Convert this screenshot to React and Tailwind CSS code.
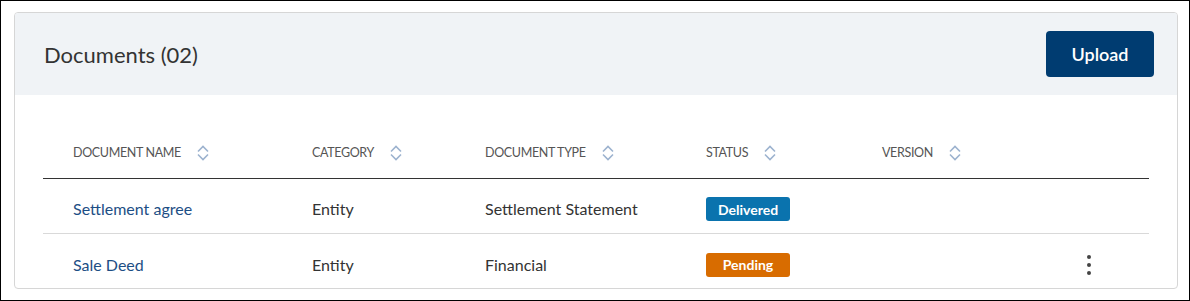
import React from "react";

function SortIcon() {
  return (
    <svg width="12" height="18" viewBox="0 0 12 18" fill="none" className="ml-[16px] shrink-0">
      <path d="M1 7.5 L6 2.5 L11 7.5" stroke="#9db3cf" strokeWidth="1.6" strokeLinejoin="miter" />
      <path d="M1 10.5 L6 15.5 L11 10.5" stroke="#9db3cf" strokeWidth="1.6" strokeLinejoin="miter" />
    </svg>
  );
}

function HeadCell({ label, sortable = true }) {
  return (
    <div className="flex items-center pl-[30px] h-full">
      <span className="text-[12.5px] tracking-[-0.35px] text-[#555555] uppercase">{label}</span>
      {sortable && <SortIcon />}
    </div>
  );
}

function Badge({ children, color }) {
  return (
    <span
      className={`inline-flex items-center justify-center w-[84px] h-[24px] rounded-[3px] text-white text-[14px] font-bold ${color}`}
    >
      {children}
    </span>
  );
}

function Kebab() {
  return (
    <div className="flex flex-col items-center gap-[4px] w-[5px]">
      <span className="w-[4px] h-[4px] rounded-full bg-[#444]" />
      <span className="w-[4px] h-[4px] rounded-full bg-[#444]" />
      <span className="w-[4px] h-[4px] rounded-full bg-[#444]" />
    </div>
  );
}

const rows = [
  { name: "Settlement agree", category: "Entity", type: "Settlement Statement", status: "Delivered", color: "bg-[#0a73ae]", menu: false, border: true },
  { name: "Sale Deed", category: "Entity", type: "Financial", status: "Pending", color: "bg-[#d86c00]", menu: true, border: false },
];

export default function App() {
  return (
    <div
      className="w-[1190px] h-[301px] border border-black bg-white pt-[11px] pl-[13px] pr-[11px] pb-[11px]"
      style={{ fontFamily: "Lato, 'Liberation Sans', sans-serif" }}
    >
      <div className="w-[1164px] h-[277px] border border-[#d6d6d6] rounded-[4px] overflow-hidden bg-white">
        <div className="h-[82px] bg-[#f0f3f6] flex items-center justify-between pl-[29px] pr-[23px]">
          <h1 className="text-[22px] text-[#333333] font-normal">Documents (02)</h1>
          <button className="w-[108px] h-[46px] rounded-[4px] bg-[#003c71] text-white text-[18px] font-semibold">
            Upload
          </button>
        </div>
        <div className="px-[28px] pt-[33px]">
          <div className="grid grid-cols-[239px_173px_221px_176px_208px_89px] h-[51px] border-b border-[#333333]">
            <HeadCell label="Document Name" />
            <HeadCell label="Category" />
            <HeadCell label="Document Type" />
            <HeadCell label="Status" />
            <HeadCell label="Version" />
            <div />
          </div>
          {rows.map((r) => (
            <div
              key={r.name}
              className={`grid grid-cols-[239px_173px_221px_176px_208px_89px] h-[55px] pt-[6px] text-[16px] ${r.border ? "border-b border-[#d9d9d9]" : ""}`}
            >
              <div className="pl-[30px] flex items-center text-[#1d4e85]">{r.name}</div>
              <div className="pl-[30px] flex items-center text-[#333333]">{r.category}</div>
              <div className="pl-[30px] flex items-center text-[#333333]">{r.type}</div>
              <div className="pl-[30px] flex items-center">
                <Badge color={r.color}>{r.status}</Badge>
              </div>
              <div />
              <div className="pl-[26px] flex items-center">{r.menu && <Kebab />}</div>
            </div>
          ))}
        </div>
      </div>
    </div>
  );
}
